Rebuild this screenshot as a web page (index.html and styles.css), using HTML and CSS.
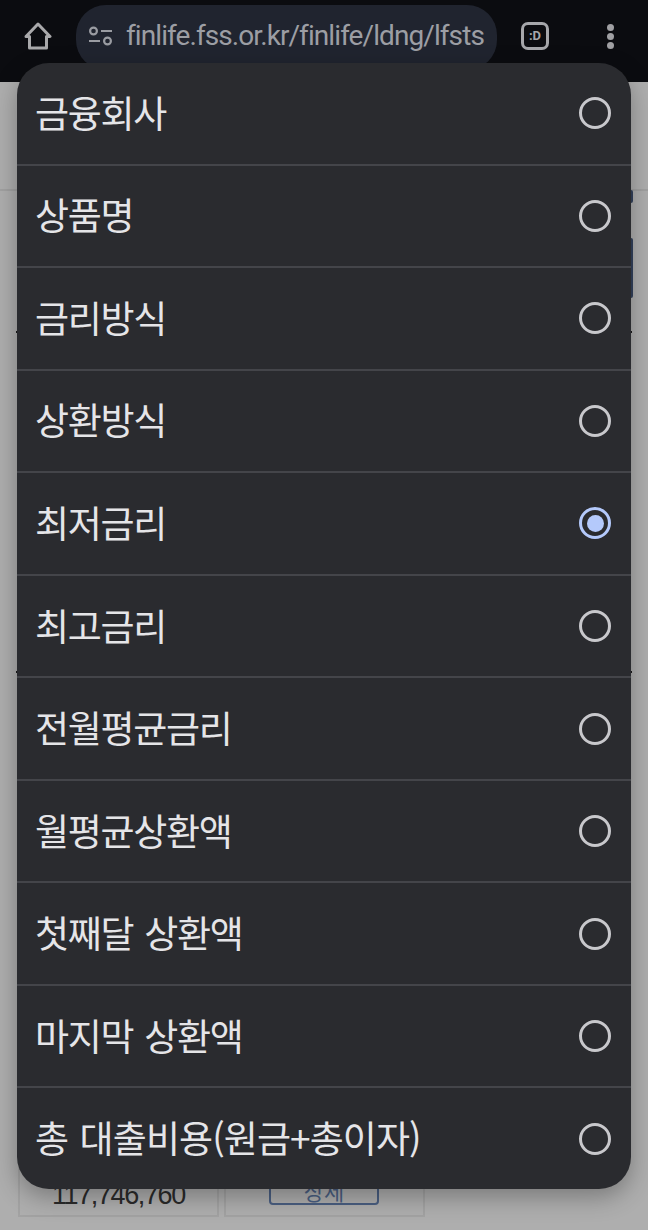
FILE: index.html
```html
<!DOCTYPE html>
<html lang="ko">
<head>
    <meta charset="UTF-8">
    <meta name="viewport" content="width=device-width, initial-scale=1.0">
    <title>finlife</title>
    <link rel="stylesheet" href="styles.css">
</head>
<body>
    <header class="toolbar">
        <svg class="icon home" viewBox="0 0 28 28" width="28" height="28">
            <path d="M14 2 26 14.5H22.5V26H5.5V14.5H2Z" fill="none" stroke="#a9a9ab" stroke-width="3" stroke-linejoin="round"/>
        </svg>
        <div class="url-pill">
            <svg class="icon tune" viewBox="0 0 24 20" width="24" height="20">
                <circle cx="5.5" cy="5" r="3.4" fill="none" stroke="#9a9ca2" stroke-width="2.2"/>
                <path d="M13 5h11M1 15h11" stroke="#9a9ca2" stroke-width="2.2"/>
                <circle cx="19.5" cy="15" r="3.4" fill="none" stroke="#9a9ca2" stroke-width="2.2"/>
            </svg>
            <span class="url-text">finlife.fss.or.kr/finlife/ldng/lfsts</span>
        </div>
        <div class="tab-btn">:D</div>
        <div class="dots"><i></i><i></i><i></i></div>
    </header>

    <main class="page">
        <div class="search-bar">
            <div class="blue-btn small"></div>
            <div class="blue-btn large"></div>
        </div>
        <div class="table-rule first"></div>
        <div class="table-rule second"></div>
        <div class="cells">
            <div class="cell"><span class="amount">117,746,760</span></div>
            <div class="cell"><span class="detail-btn">상세</span></div>
        </div>
    </main>

    <div class="sheet">
        <label class="option"><span>금융회사</span><i class="radio"></i></label>
        <label class="option"><span>상품명</span><i class="radio"></i></label>
        <label class="option"><span>금리방식</span><i class="radio"></i></label>
        <label class="option"><span>상환방식</span><i class="radio"></i></label>
        <label class="option"><span>최저금리</span><i class="radio checked"></i></label>
        <label class="option"><span>최고금리</span><i class="radio"></i></label>
        <label class="option"><span>전월평균금리</span><i class="radio"></i></label>
        <label class="option"><span>월평균상환액</span><i class="radio"></i></label>
        <label class="option"><span>첫째달 상환액</span><i class="radio"></i></label>
        <label class="option"><span>마지막 상환액</span><i class="radio"></i></label>
        <label class="option wide"><span>총 대출비용(원금+총이자)</span><i class="radio"></i></label>
    </div>
</body>
</html>
```

FILE: styles.css
```css
* {
    box-sizing: border-box;
}

html, body {
    margin: 0;
    height: 1230px;
    overflow: hidden;
}

body {
    position: relative;
    background-color: #aeaeae;
    font-family: "Noto Sans CJK KR", "Noto Sans", sans-serif;
}

.toolbar {
    height: 82px;
    background-color: #0b0c10;
    display: flex;
    align-items: flex-start;
    padding: 5px 0 0 24px;
}

.icon {
    display: block;
    flex-shrink: 0;
}

.home {
    margin-top: 17px;
}

.url-pill {
    width: 421px;
    height: 65px;
    margin-left: 24px;
    padding-left: 12px;
    background-color: #20242f;
    border-radius: 30px;
    display: flex;
    align-items: flex-start;
    color: #9c9ea4;
}

.tune {
    margin-top: 21px;
}

.url-text {
    margin-left: 14px;
    margin-top: 14px;
    font-family: Roboto, sans-serif;
    font-size: 28px;
    letter-spacing: -0.92px;
    line-height: 34px;
    white-space: nowrap;
}

.tab-btn {
    width: 28px;
    height: 28px;
    margin: 17px 0 0 24px;
    border: 3px solid #a6a7ab;
    border-radius: 7px;
    color: #a6a7ab;
    font-family: Roboto, sans-serif;
    font-size: 13px;
    font-weight: 700;
    line-height: 22px;
    text-align: center;
}

.dots {
    margin: 19px 0 0 58px;
    display: flex;
    flex-direction: column;
    gap: 2px;
}

.dots i {
    display: block;
    width: 7px;
    height: 7px;
    border-radius: 50%;
    background-color: #a0a0a3;
}

.page {
    height: 1148px;
    padding: 0 16px;
}

.search-bar {
    height: 109px;
    margin: 0 -16px;
    border-bottom: 2px solid #a1a1a1;
    position: relative;
}

.blue-btn {
    position: absolute;
    right: 15px;
    width: 20px;
    background-color: #33415c;
    border-radius: 2px;
}

.blue-btn.small {
    top: 108px;
    height: 13px;
}

.blue-btn.large {
    top: 156px;
    height: 60px;
}

.table-rule {
    height: 2px;
    background-color: #1d1d1d;
}

.table-rule.first {
    margin-top: 140px;
}

.table-rule.second {
    margin-top: 338px;
}

.cells {
    margin: 465px 0 0 2px;
    display: flex;
    gap: 5px;
}

.cell {
    width: 201px;
    height: 79px;
    border: 2px solid #a2a2a2;
    border-top: none;
    position: relative;
    text-align: center;
}

.amount {
    position: absolute;
    left: 32px;
    bottom: 5px;
    font-family: "Liberation Sans", sans-serif;
    font-size: 27px;
    letter-spacing: -1.4px;
    line-height: 30px;
    color: #2b2b2b;
}

.detail-btn {
    position: absolute;
    left: 43px;
    bottom: 10px;
    width: 110px;
    height: 30px;
    border: 2px solid #4a5f82;
    border-radius: 4px;
    font-size: 22px;
    line-height: 26px;
    color: #4a5f82;
}

/* select sheet over the page */
.sheet {
    position: absolute;
    left: 17px;
    top: 63px;
    width: 614px;
    height: 1126px;
    background-color: #2a2b2f;
    border-radius: 32px;
    box-shadow: 0 8px 24px rgba(0, 0, 0, 0.3);
    display: flex;
    flex-direction: column;
    overflow: hidden;
}

.option {
    flex: 1;
    display: flex;
    align-items: center;
    justify-content: space-between;
    padding: 0 20px 0 18px;
    border-bottom: 2px solid #44454a;
    color: #e5e5e8;
    white-space: nowrap;
}

.option span {
    font-size: 37px;
    letter-spacing: -1.3px;
    word-spacing: 2px;
    line-height: 44px;
    margin-top: -3px;
}

.option.wide span {
    letter-spacing: -0.9px;
}

.option:last-child {
    border-bottom: none;
}

.radio {
    display: block;
    width: 32px;
    height: 32px;
    border: 3px solid #c8c8cc;
    border-radius: 50%;
}

.radio.checked {
    border-color: #b4c9fb;
    position: relative;
}

.radio.checked::after {
    content: "";
    position: absolute;
    left: 4.5px;
    top: 4.5px;
    width: 17px;
    height: 17px;
    border-radius: 50%;
    background-color: #b4c9fb;
}
```
